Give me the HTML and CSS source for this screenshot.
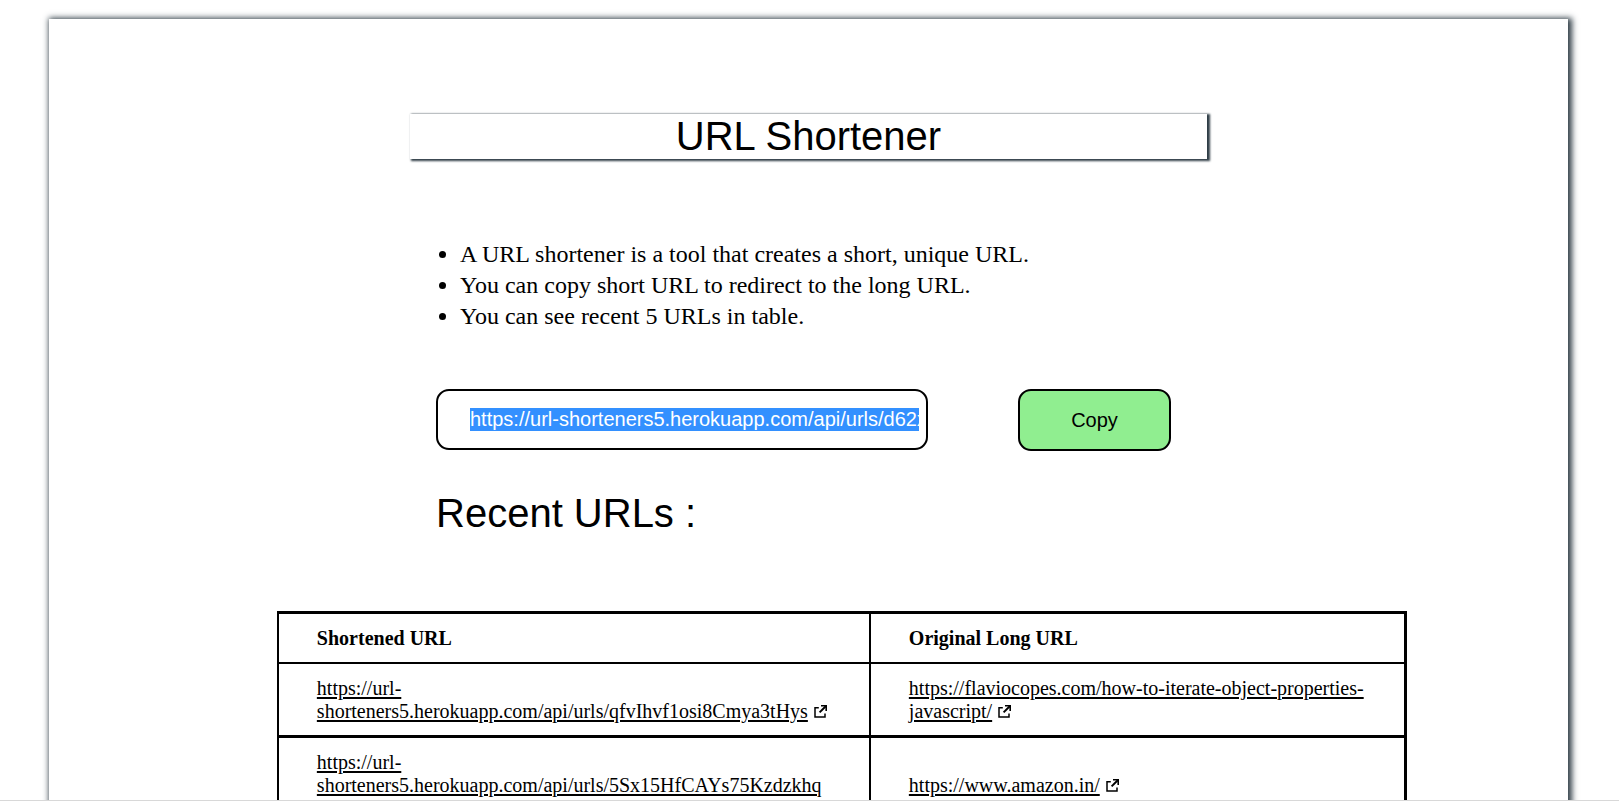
FILE: index.html
```
<!DOCTYPE html>
<html lang="en">
<head>
<meta charset="utf-8">
<title>URL Shortener</title>
<link rel="stylesheet" href="styles.css">
</head>
<body>
<svg class="sprite" aria-hidden="true">
  <symbol id="external" viewBox="0 0 13 13">
    <path d="M4.8 2.8H1v9.3h10V8.5" fill="none" stroke="currentColor" stroke-width="1.5"/>
    <path d="M7 .8h5.2v5.2" fill="none" stroke="currentColor" stroke-width="1.6"/>
    <path d="M12 1 5.6 7.4" fill="none" stroke="currentColor" stroke-width="2"/>
  </symbol>
</svg>
<div class="viewport">
  <main class="card">
    <h1 class="title">URL Shortener</h1>
    <div class="content">
      <ul class="notes">
        <li>A URL shortener is a tool that creates a short, unique URL.</li>
        <li>You can copy short URL to redirect to the long URL.</li>
        <li>You can see recent 5 URLs in table.</li>
      </ul>
      <div class="copy-row">
        <input class="short-url" id="short-url" type="text" aria-label="Short URL" readonly value="https://url-shorteners5.herokuapp.com/api/urls/d62xKq81LmTz">
        <button class="copy" type="button">Copy</button>
      </div>
      <h2 class="subtitle">Recent URLs :</h2>
    </div>
    <table class="urls">
      <thead>
        <tr><th class="short" scope="col">Shortened URL</th><th scope="col">Original Long URL</th></tr>
      </thead>
      <tbody>
        <tr>
          <td><a href="#">https://url-shorteners5.herokuapp.com/api/urls/qfvIhvf1osi8Cmya3tHys<svg class="icon"><use href="#external"/></svg></a></td>
          <td><a href="#">https://flaviocopes.com/how-to-iterate-object-properties-javascript/<svg class="icon"><use href="#external"/></svg></a></td>
        </tr>
        <tr>
          <td><a href="#">https://url-shorteners5.herokuapp.com/api/urls/5Sx15HfCAYs75Kzdzkhq<svg class="icon"><use href="#external"/></svg></a></td>
          <td><a href="#">https://www.amazon.in/<svg class="icon"><use href="#external"/></svg></a></td>
        </tr>
      </tbody>
    </table>
  </main>
</div>
<footer class="bottom-bar"></footer>
<script src="script.js"></script>
</body>
</html>
```
FILE: styles.css
```
* {
  box-sizing: border-box;
}

body {
  display: flex;
  flex-direction: column;
  height: 100vh;
  margin: 0;
  background: #fff;
  color: #000;
  font-family: "Liberation Serif", "Times New Roman", serif;
}

.sprite {
  position: absolute;
  width: 0;
  height: 0;
}

.viewport {
  flex: 1;
  min-height: 0;
  overflow: hidden;
}

.card {
  min-height: 100vh;
  margin: 19px 51px 19px 49px;
  padding-top: 95px;
  box-shadow: 2px 1px 6px 2px #2f3d46;
}

.title,
.subtitle {
  margin: 0;
  font-family: "Liberation Sans", Arial, sans-serif;
  font-size: 40px;
  font-weight: 400;
  line-height: 45px;
}

.title {
  max-width: 797px;
  margin: 0 auto;
  text-align: center;
  box-shadow: 2px 1px 2px 1px #2f3d46;
}

.content {
  max-width: 745px;
  margin: 80px auto 0;
}

.notes {
  margin: 0;
  padding-left: 24px;
  font-size: 24px;
  line-height: 31px;
}

.copy-row {
  display: flex;
  align-items: flex-start;
  gap: 90px;
  margin-top: 57px;
}

.short-url,
.copy {
  border: 2px solid #000;
  border-radius: 13px;
  font-family: "Liberation Sans", Arial, sans-serif;
  font-size: 20px;
}

.short-url {
  width: 492px;
  height: 61px;
  padding: 0 7px 0 32px;
  background: #fff;
  color: #000;
  outline: none;
}

.short-url::selection {
  background: #3390ff;
  color: #fff;
}

.copy {
  width: 153px;
  height: 62px;
  padding: 0;
  background: lightgreen;
  color: #000;
}

.subtitle {
  margin-top: 40px;
}

.urls {
  width: 1130px;
  margin: 75px 0 0 15%;
  border: solid #000;
  border-width: 3px 3px 3px 2px;
  border-spacing: 0;
  table-layout: fixed;
  font-size: 20px;
  line-height: 23px;
}

.urls th,
.urls td {
  padding: 13px 38px 12px;
  text-align: left;
  vertical-align: middle;
}

.urls .short {
  width: 592px;
}

.urls th {
  border-bottom: 2px solid #000;
}

.urls td {
  border-bottom: 3px solid #000;
}

.urls th:first-child,
.urls td:first-child {
  border-right: 2px solid #000;
}

.urls a {
  color: #000;
  text-decoration: underline 2px;
  text-underline-offset: 2px;
}

.icon {
  width: 13px;
  height: 13px;
  margin-left: 6px;
}

.bottom-bar {
  height: 7px;
  border-top: 1px solid #d8d8d8;
  background: #fff;
}
```
FILE: script.js
```
const field = document.getElementById("short-url");
field.focus();
field.setSelectionRange(0, field.value.length, "backward");
field.scrollLeft = 0;
```
